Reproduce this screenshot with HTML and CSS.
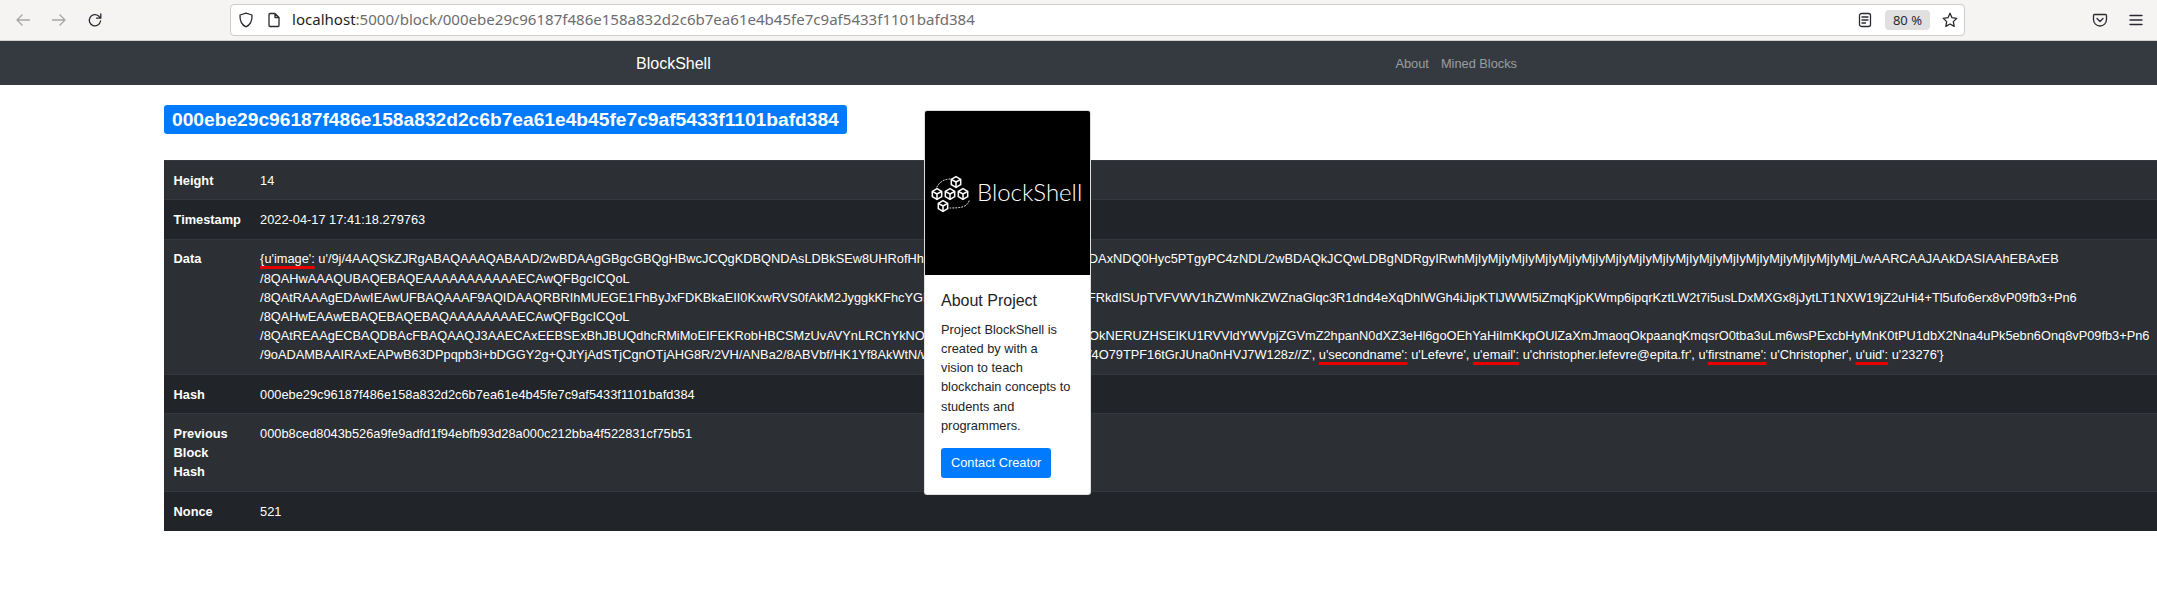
FILE: index.html
```html
<!DOCTYPE html>
<html lang="en">
<head>
<meta charset="UTF-8">
<meta name="viewport" content="width=device-width, initial-scale=1.0">
<title>BlockShell</title>
<link rel="stylesheet" href="styles.css">
</head>
<body>

<!-- browser chrome -->
<div class="toolbar">
  <svg class="tb-icon faded" viewBox="0 0 16 16"><path d="M14.5 8H2M7 3 2 8l5 5"/></svg>
  <svg class="tb-icon faded" viewBox="0 0 16 16"><path d="M1.5 8H14M9 3l5 5-5 5"/></svg>
  <svg class="tb-icon" viewBox="0 0 16 16"><path d="M13.5 9a5.6 5.6 0 1 1-1.8-4.9L13.5 6M13.8 1.8V6.200H9.500"/></svg>
  <div class="urlbar">
    <svg class="tb-icon" viewBox="0 0 16 16"><path d="M8 1.200 14 3c.3 6-1.500 9.800-6 11.800C3.500 12.800 1.700 9 2 3z"/></svg>
    <svg class="tb-icon" viewBox="0 0 16 16"><path d="M3 2.500c0-.6.400-1 1-1h5l4 4v8c0 .6-.4 1-1 1H4c-.6 0-1-.4-1-1zM9 1.500v4h4"/></svg>
    <div class="url"><span class="host">localhost</span>:5000/block/000ebe29c96187f486e158a832d2c6b7ea61e4b45fe7c9af5433f1101bafd384</div>
    <svg class="tb-icon" viewBox="0 0 16 16"><rect x="2.500" y="1.500" width="11" height="13" rx="2"/><path d="M5 5h6M5 8h6M5 11h3.500"/></svg>
    <div class="zoom-pill">80 %</div>
    <svg class="tb-icon" viewBox="0 0 16 16"><path d="m8 1.300 2 4.400 4.800.6-3.500 3.300.9 4.800L8 12l-4.200 2.400.9-4.800L1.200 6.300 6 5.700z"/></svg>
  </div>
  <svg class="tb-icon" viewBox="0 0 16 16"><path d="M2.500 2.500h11c.6 0 1 .4 1 1v4a6.500 6.500 0 0 1-13 0v-4c0-.6.4-1 1-1zM5 6.500 8 9.500l3-3"/></svg>
  <svg class="tb-icon" viewBox="0 0 16 16"><path d="M2 3.500h12M2 8h12M2 12.500h12"/></svg>
</div>

<nav class="navbar">
  <a class="brand" href="#">BlockShell</a>
  <div class="nav-links">
    <a href="#">About</a>
    <a href="#">Mined Blocks</a>
  </div>
</nav>

<main class="content">
  <h2 class="block-title"><span class="badge">000ebe29c96187f486e158a832d2c6b7ea61e4b45fe7c9af5433f1101bafd384</span></h2>

  <table class="block-table">
    <tr>
      <th>Height</th>
      <td>14</td>
    </tr>
    <tr>
      <th>Timestamp</th>
      <td>2022-04-17 17:41:18.279763</td>
    </tr>
    <tr>
      <th>Data</th>
      <td><span class="spell">{u'image':</span> u'/9j/4AAQSkZJRgABAQAAAQABAAD/2wBDAAgGBgcGBQgHBwcJCQgKDBQNDAsLDBkSEw8UHRofHh0aHBwgJC4nICIsIxwcKDcpLDAxNDQ0Hyc5PTgyPC4zNDL/2wBDAQkJCQwLDBgNDRgyIRwhMjIyMjIyMjIyMjIyMjIyMjIyMjIyMjIyMjIyMjIyMjIyMjIyMjIyMjIyMjIyMjIyMjL/wAARCAAJAAkDASIAAhEBAxEB<br>
/8QAHwAAAQUBAQEBAQEAAAAAAAAAAAECAwQFBgcICQoL<br>
/8QAtRAAAgEDAwIEAwUFBAQAAAF9AQIDAAQRBRIhMUEGE1FhByJxFDKBkaEII0KxwRVS0fAkM2JyggkKFhcYGRolJicoKSo0NTY3ODk6Q0RFRkdISUpTVFVWV1hZWmNkZWZnaGlqc3R1dnd4eXqDhIWGh4iJipKTlJWWl5iZmqKjpKWmp6ipqrKztLW2t7i5usLDxMXGx8jJytLT1NXW19jZ2uHi4+Tl5ufo6erx8vP09fb3+Pn6<br>
/8QAHwEAAwEBAQEBAQEBAQAAAAAAAAECAwQFBgcICQoL<br>
/8QAtREAAgECBAQDBAcFBAQAAQJ3AAECAxEEBSExBhJBUQdhcRMiMoEIFEKRobHBCSMzUvAVYnLRChYkNOEl8RcYGRomJygpKjU2Nzg5OkNERUZHSElKU1RVVldYWVpjZGVmZ2hpanN0dXZ3eHl6goOEhYaHiImKkpOUlZaXmJmaoqOkpaanqKmqsrO0tba3uLm6wsPExcbHyMnK0tPU1dbX2Nna4uPk5ebn6Onq8vP09fb3+Pn6<br>
/9oADAMBAAIRAxEAPwB63DPpqpb3i+bDGGY2g+QJtYjAdSTjCgnOTjAHG8R/2VH/ANBa2/8ABVbf/HK1Yf8AkWtN/wBn8Tf9hEbz5xahr8A9BXVb/4O79TPF16tGrJUna0nHVJ7W128z//Z', <span class="spell">u'secondname':</span> u'Lefevre', <span class="spell">u'email':</span> u'christopher.lefevre@epita.fr', u'<span class="spell">firstname':</span> u'Christopher', <span class="spell">u'uid':</span> u'23276'}</td>
    </tr>
    <tr>
      <th>Hash</th>
      <td>000ebe29c96187f486e158a832d2c6b7ea61e4b45fe7c9af5433f1101bafd384</td>
    </tr>
    <tr>
      <th>Previous Block Hash</th>
      <td>000b8ced8043b526a9fe9adfd1f94ebfb93d28a000c212bba4f522831cf75b51</td>
    </tr>
    <tr>
      <th>Nonce</th>
      <td>521</td>
    </tr>
  </table>

  <!-- card sits over the table, same as the screenshot -->
  <div class="card">
    <div class="card-img">
      <svg viewBox="0 0 165 164" role="img" aria-label="BlockShell logo">
        <defs>
          <g id="cube" transform="scale(.9)">
            <path d="M0-6 5.200-3V3L0 6-5.200 3V-3z"/>
            <path d="M-5.200-3 0 0 5.200-3M0 0V6"/>
          </g>
        </defs>
        <path class="dots" d="M12 76C14 71 20 68 25 68M44 90C42 96 36 97 25 97"/>
        <use href="#cube" x="31" y="71"/>
        <use href="#cube" x="12" y="83"/>
        <use href="#cube" x="25" y="83"/>
        <use href="#cube" x="38" y="83"/>
        <use href="#cube" x="18" y="95"/>
        <text class="logo-text" x="52" y="90">BlockShell</text>
      </svg>
    </div>
    <div class="card-body">
      <h5 class="card-title">About Project</h5>
      <p class="card-text">Project BlockShell is created by with a vision to teach blockchain concepts to students and programmers.</p>
      <a class="btn" href="#">Contact Creator</a>
    </div>
  </div>
</main>

</body>
</html>
```

FILE: styles.css
```css
* { box-sizing: border-box; }

body {
  margin: 0;
  background: #fff;
  color: #212529;
  font-family: "Liberation Sans", Arial, sans-serif;
  font-size: 12.8px;
  line-height: 1.5;
  overflow-x: hidden;
}

a { text-decoration: none; }

/* browser toolbar */
.toolbar {
  display: flex;
  align-items: center;
  gap: 20px;
  height: 41px;
  padding: 0 13px 1px 15px;
  background: #f5f4f2;
  border-bottom: 1px solid #d3d0cb;
}
.tb-icon {
  flex: none;
  width: 16px;
  height: 16px;
  fill: none;
  stroke: #2b2a33;
  stroke-width: 1.300;
  stroke-linecap: round;
  stroke-linejoin: round;
}
.tb-icon.faded { stroke: #a5a5a8; }

.urlbar {
  display: flex;
  align-items: center;
  gap: 12px;
  width: 1735px;
  height: 32px;
  margin: 0 107px 0 107px;
  padding: 0 6px 0 7px;
  background: #fff;
  border: 1px solid #cfcbc5;
  border-radius: 4px;
}
.url {
  flex: 1;
  margin-left: -2px;
  color: #6d6d70;
  font-family: "Noto Sans", sans-serif;
  font-size: 15.050px;
  white-space: nowrap;
  overflow: hidden;
}
.url .host { color: #1f1f24; }
.zoom-pill {
  padding: 0 8px;
  background: #e0e0e0;
  border-radius: 4px;
  color: #2b2a33;
  font-family: "Noto Sans", sans-serif;
  font-size: 13px;
  line-height: 20px;
}

/* site navbar */
.navbar {
  display: flex;
  align-items: center;
  justify-content: space-between;
  height: 44px;
  padding: 1px 640px 0 636px;
  background: #343a40;
}
.brand {
  color: #fff;
  font-size: 16px;
}
.nav-links {
  display: flex;
  gap: 12px;
}
.nav-links a { color: rgba(255,255,255,.5); }

.content {
  position: relative;
  padding: 20px 0 0 164px;
}

.block-title {
  margin: 0 0 26px;
  font-size: 25.6px;
  line-height: 29px;
}
.badge {
  display: inline-block;
  padding: 4.800px 8px;
  background: #007bff;
  border-radius: 3.200px;
  color: #fff;
  font-size: 19.200px;
  font-weight: 700;
  line-height: 1;
  vertical-align: top;
  white-space: nowrap;
}

/* block details */
.block-table {
  width: 100%;
  border-collapse: collapse;
  background: #212529;
  color: #fff;
}
.block-table th,
.block-table td {
  padding: 9.600px;
  border-top: 1px solid #32383e;
  text-align: left;
  vertical-align: top;
}
.block-table th {
  width: 88px;
  font-weight: 700;
}
.block-table td { white-space: nowrap; }
.block-table tr:nth-child(odd) { background: #2c3034; }

.spell {
  text-decoration: underline #e60000 3px;
  text-decoration-skip-ink: none;
  text-underline-offset: 3px;
}

/* about card */
.card {
  position: absolute;
  top: 25px;
  left: 924px;
  width: 167px;
  background: #fff;
  border: 1px solid rgba(0,0,0,.125);
  border-radius: 3.200px;
}
.card-img {
  height: 164px;
  background: #000;
  border-radius: 2px 2px 0 0;
}
.card-img svg {
  display: block;
  width: 100%;
  height: 100%;
  fill: none;
  stroke: #fff;
  stroke-width: 1.700;
  stroke-linejoin: round;
}
.card-img .dots {
  stroke-width: 1;
  stroke-dasharray: 1 2;
  stroke-linecap: round;
}
.logo-text {
  fill: #fff;
  stroke: none;
  font-family: Lato, sans-serif;
  font-size: 24px;
  font-weight: 300;
}
.card-body { padding: 16px 19px 16px 16px; }
.card-title {
  margin: 0 0 9.600px;
  font-size: 16px;
  font-weight: 500;
  line-height: 1.200;
}
.card-text { margin: 0 0 12.800px; }
.btn {
  display: inline-block;
  padding: 5.600px 10px;
  background: #007bff;
  border-radius: 3.200px;
  color: #fff;
}
```
